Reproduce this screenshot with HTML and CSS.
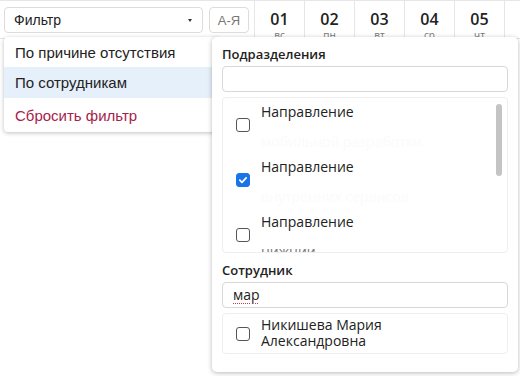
FILE: index.html
```html
<!DOCTYPE html>
<html lang="ru">
  <head>
    <meta charset="UTF-8" />
    <title>График</title>
    <link rel="stylesheet" href="styles.css">
  </head>
  <body>
    <div class="toolbar">
      <div class="controls">
        <div class="select">
          <span>Фильтр</span>
          <span class="caret"></span>
        </div>
        <button class="sort">А-Я</button>
      </div>
      <div class="day"><b>01</b><small>вс</small></div>
      <div class="day"><b>02</b><small>пн</small></div>
      <div class="day"><b>03</b><small>вт</small></div>
      <div class="day"><b>04</b><small>ср</small></div>
      <div class="day"><b>05</b><small>чт</small></div>
      <div class="day"><b>06</b><small>пт</small></div>
    </div>

    <!-- Filter menu -->
    <ul class="menu">
      <li>По причине отсутствия</li>
      <li class="active">По сотрудникам</li>
      <li class="reset">Сбросить фильтр</li>
    </ul>

    <!-- Employees filter panel -->
    <div class="panel">
      <div class="label">Подразделения</div>
      <input class="field" type="text" />
      <div class="list">
        <div class="scroll"></div>
        <div class="item">
          <span class="check"></span>
          <div class="text">Направление<span class="ghost">мобильной разработки</span></div>
        </div>
        <div class="item">
          <span class="check on"></span>
          <div class="text">Направление<span class="ghost">внутренних сервисов</span></div>
        </div>
        <div class="item">
          <span class="check"></span>
          <div class="text">Направление<span class="ghost dark">нижнии</span></div>
        </div>
      </div>
      <div class="label second">Сотрудник</div>
      <div class="field typed"><span class="spell">мар</span></div>
      <div class="result">
        <span class="check"></span>
        <div class="text">Никишева Мария<br />Александровна</div>
      </div>
    </div>
  </body>
</html>
```

FILE: styles.css
```css
body {
  margin: 0;
  font-family: "Liberation Sans", Arial, sans-serif;
  background-color: #fff;
  color: #212529;
}

/* Top bar */
.toolbar {
  display: flex;
  height: 37px;
  border-top: 1px solid #e6e6e6;
  border-bottom: 1px solid #e6e6e6;
  overflow: hidden;
}

.controls {
  display: flex;
  flex: 0 0 auto;
  gap: 6px;
  width: 250px;
  padding: 6px 0 0 4px;
}

.select {
  display: flex;
  align-items: center;
  justify-content: space-between;
  width: 178px;
  height: 24px;
  padding: 0 10px 0 9px;
  border: 1px solid #dcdcdc;
  border-radius: 4px;
  font-size: 14px;
  color: #222;
}

.caret {
  width: 0;
  height: 0;
  border-left: 2px solid transparent;
  border-right: 2px solid transparent;
  border-top: 3px solid #333;
}

.sort {
  width: 40px;
  height: 26px;
  padding: 0;
  border: 1px solid #dcdcdc;
  border-radius: 4px;
  background-color: #fff;
  font-family: "Liberation Sans", Arial, sans-serif;
  font-size: 13px;
  color: #777;
}

.day {
  display: flex;
  flex-direction: column;
  align-items: center;
  flex: 0 0 49px;
  border-left: 1px solid #e6e6e6;
  font-family: "Open Sans", sans-serif;
  padding-top: 8px;
}

.day b {
  font-size: 16px;
  font-weight: 600;
  line-height: 20px;
  color: #222;
}

.day small {
  font-size: 10px;
  line-height: 12px;
  color: #777;
}

/* Left dropdown */
.menu {
  position: absolute;
  left: 4px;
  top: 37px;
  width: 215px;
  margin: 0;
  padding: 0;
  list-style: none;
  background-color: #fff;
  border-radius: 4px;
  box-shadow: 0 1px 4px rgba(0, 0, 0, 0.25);
  font-size: 15px;
}

.menu li {
  padding: 6px 11px 6px 11px;
  height: 19px;
  line-height: 19px;
  color: #222;
}

.menu li:first-child {
  padding-top: 6px;
  padding-bottom: 5px;
}

.menu li.active {
  background-color: #e6f0fb;
  padding-top: 6px;
  padding-bottom: 6px;
}

.menu li.reset {
  color: #a5234a;
  padding-top: 8px;
  padding-bottom: 7px;
}

/* Right panel */
.panel {
  position: absolute;
  left: 212px;
  top: 37px;
  width: 286px;
  height: 312px;
  padding: 8px 10px 15px 10px;
  background-color: #fff;
  border-radius: 5px;
  box-shadow: 0 1px 5px rgba(0, 0, 0, 0.28);
  font-family: "Open Sans", "Noto Sans", sans-serif;
  color: #222;
}

.label {
  font-size: 13px;
  font-weight: 600;
  line-height: 18px;
  margin-bottom: 3px;
}

.label.second {
  margin-top: 8px;
}

.field {
  display: block;
  box-sizing: border-box;
  width: 100%;
  height: 26px;
  margin: 0;
  border: 1px solid #d8d8d8;
  border-radius: 4px;
  background-color: #fff;
}

.typed {
  padding: 0 10px;
  font-size: 14px;
  line-height: 24px;
}

.spell {
  text-decoration: underline dotted #d33;
  text-decoration-thickness: 1px;
  text-underline-offset: 3px;
}

.list {
  position: relative;
  box-sizing: border-box;
  height: 156px;
  margin-top: 5px;
  border: 1px solid #eeeeee;
  border-radius: 4px;
  overflow: hidden;
}

.scroll {
  position: absolute;
  right: 5px;
  top: 6px;
  width: 6px;
  height: 72px;
  border-radius: 3px;
  background-color: #c4c4c4;
}

.item {
  display: flex;
  align-items: flex-start;
  gap: 11px;
  box-sizing: border-box;
  height: 55px;
  padding: 3px 0 0 13px;
  overflow: hidden;
}

.check {
  flex: 0 0 auto;
  box-sizing: border-box;
  width: 14px;
  height: 14px;
  margin-top: 17px;
  border: 1px solid #555;
  border-radius: 3px;
  background-color: #fff;
}

.check.on {
  border-color: #1a73e8;
  background-color: #1a73e8;
  background-image: url("data:image/svg+xml;utf8,<svg xmlns='http://www.w3.org/2000/svg' viewBox='0 0 14 14'><path d='M3.3 7.2l2.5 2.5 4.9-5.2' fill='none' stroke='white' stroke-width='2' stroke-linecap='round' stroke-linejoin='round'/></svg>");
}

.text {
  font-size: 14px;
  line-height: 22px;
}

.ghost {
  display: block;
  color: #fbfbfb;
  margin-top: 8px;
}

.ghost.dark {
  color: #777;
}

.result {
  display: flex;
  gap: 11px;
  box-sizing: border-box;
  height: 41px;
  margin-top: 5px;
  padding: 3px 0 0 13px;
  border: 1px solid #eeeeee;
  border-radius: 4px;
}

.result .check {
  margin-top: 10px;
}

.result .text {
  line-height: 16px;
}
```
